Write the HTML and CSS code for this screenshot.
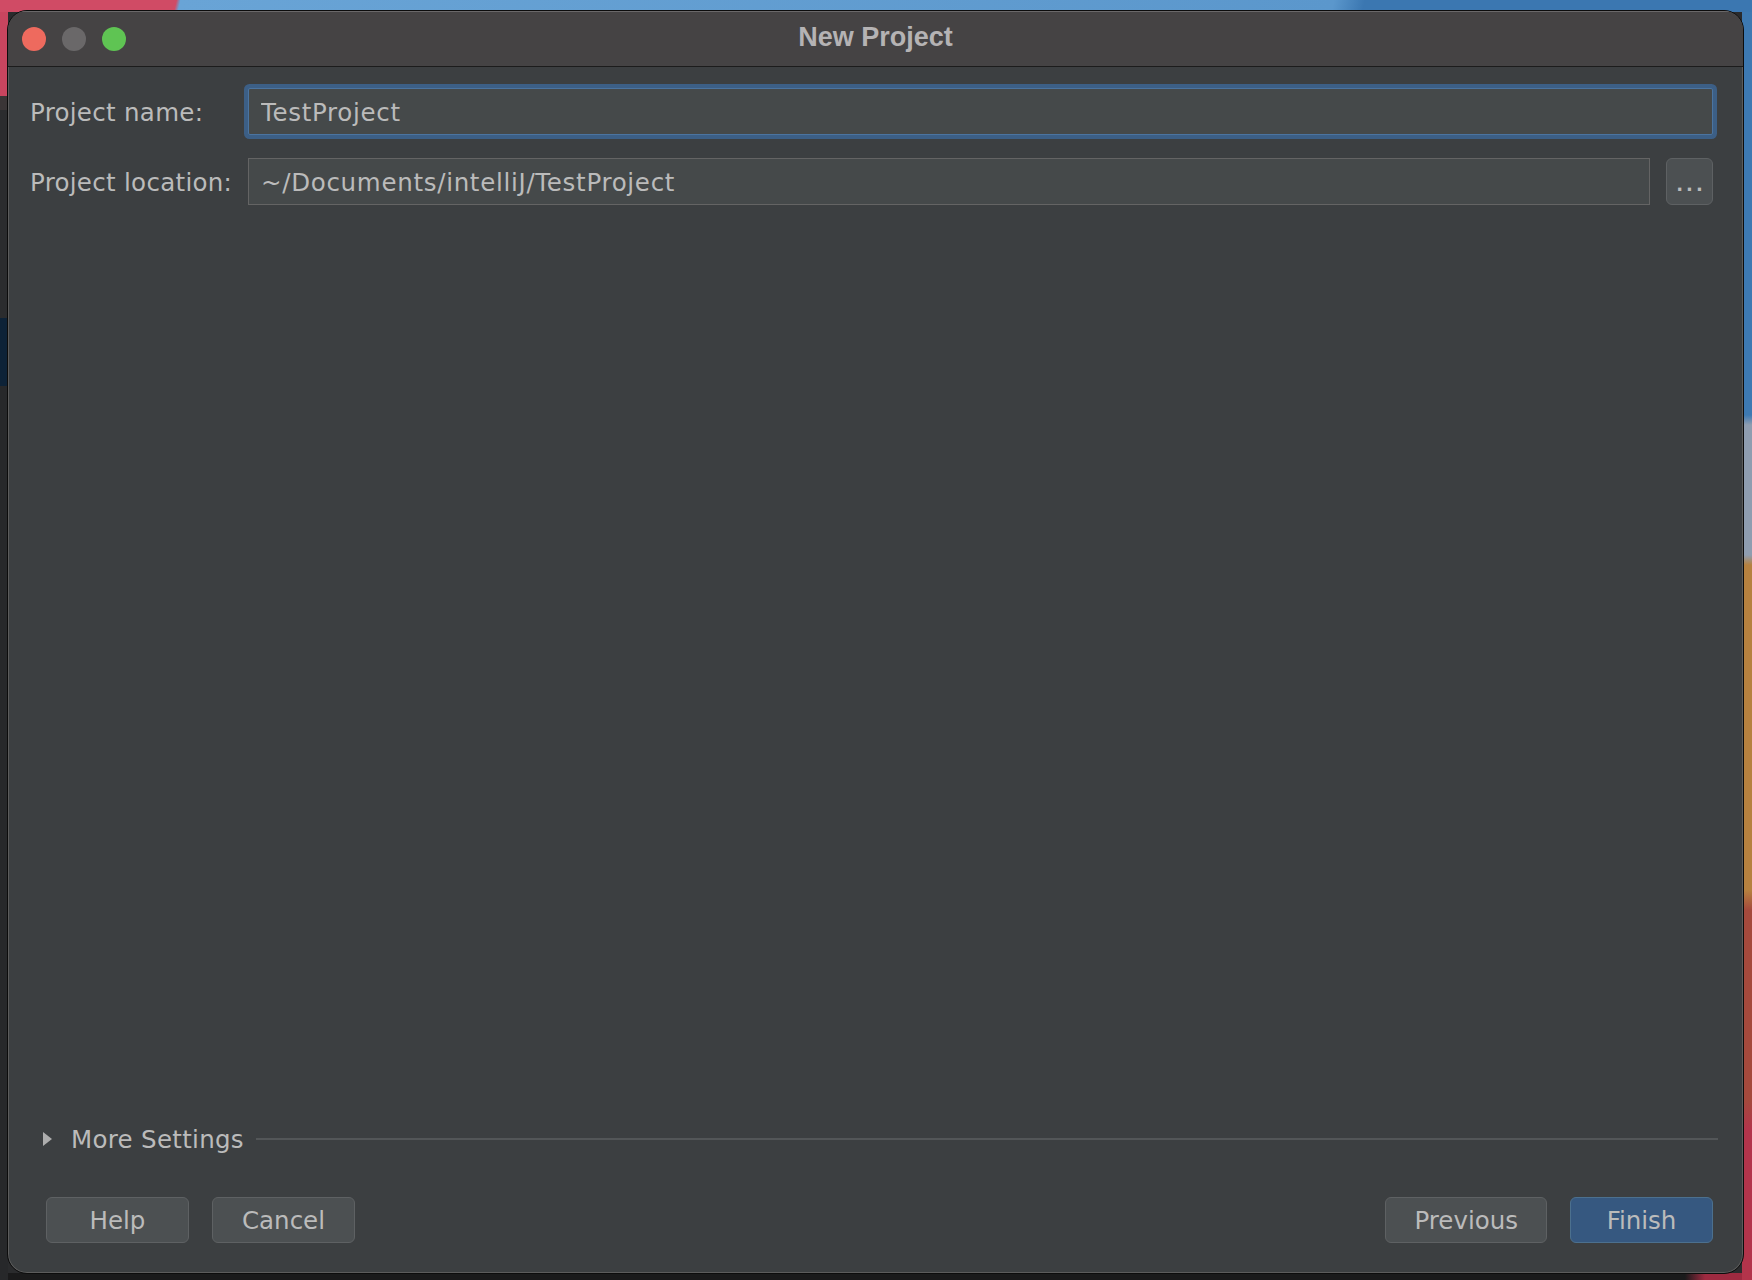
FILE: index.html
```html
<!DOCTYPE html>
<html lang="en">
<head>
    <meta charset="UTF-8">
    <meta name="viewport" content="width=device-width, initial-scale=1.0">
    <title>New Project</title>
    <link rel="stylesheet" href="styles.css">
</head>
<body>
    <div class="window">
        <header class="titlebar">
            <div class="lights">
                <span class="light close"></span>
                <span class="light minimize"></span>
                <span class="light zoom"></span>
            </div>
            <h1>New Project</h1>
            <div></div>
        </header>

        <main class="content">
            <div class="form">
                <label for="name">Project name:</label>
                <input type="text" id="name" class="field focused" value="TestProject">

                <label for="location">Project location:</label>
                <div class="location">
                    <input type="text" id="location" class="field" value="~/Documents/intelliJ/TestProject">
                    <button class="browse">...</button>
                </div>
            </div>

            <div class="spacer"></div>

            <!-- collapsed section -->
            <div class="more">
                <span class="arrow"></span>
                <span class="more-title">More Settings</span>
                <span class="rule"></span>
            </div>

            <footer class="actions">
                <div class="group">
                    <button>Help</button>
                    <button>Cancel</button>
                </div>
                <div class="group">
                    <button>Previous</button>
                    <button class="primary">Finish</button>
                </div>
            </footer>
        </main>
    </div>
</body>
</html>
```

FILE: styles.css
```css
* {
    margin: 0;
    padding: 0;
    box-sizing: border-box;
}

body {
    width: 1752px;
    height: 1280px;
    padding: 10px 8px 6px 7px;
    font-family: "DejaVu Sans", Verdana, sans-serif;
    color: #bbbbbb;
    background-color: #2a2b2d;
    background-image:
        linear-gradient(103deg, #d04b65 0 172px, #69a4d6 176px, #5b97cc 1300px, #3b77b1 1330px),
        linear-gradient(to bottom, #c9455f 0 96px, #3a3536 96px 110px, #2b2c2e 110px 318px, #0d2237 318px 386px, #27282a 386px),
        linear-gradient(to bottom, #3d79b2 0 415px, #8f9db0 425px 555px, #b6813f 565px 890px, #a4493c 910px 1100px, #b3344b 1130px),
        linear-gradient(to right, #1a1a1b 0 1685px, #9e2a40 1705px);
    background-repeat: no-repeat;
    background-position: 0 0, 0 0, right 0 top 0, 0 bottom;
    background-size: 100% 12px, 8px 100%, 10px 100%, 100% 7px;
}

.window {
    width: 1737px;
    height: 1264px;
    display: flex;
    flex-direction: column;
    background-color: #3c3f41;
    border: 1px solid #0c0c0c;
    border-radius: 20px;
    overflow: hidden;
    box-shadow: inset 0 0 0 1px #5c5c5c;
}

.titlebar {
    height: 56px;
    display: grid;
    grid-template-columns: 1fr auto 1fr;
    align-items: center;
    background-color: #454344;
    border-bottom: 1px solid #1c1c1c;
    box-shadow: inset 0 1px 0 #6a6869;
}

.lights {
    display: flex;
    gap: 16px;
    padding-left: 14px;
}

.light {
    width: 24px;
    height: 24px;
    border-radius: 50%;
}

.close { background-color: #ee6a5e; }
.minimize { background-color: #6a6869; }
.zoom { background-color: #5fc453; }

.titlebar h1 {
    margin-top: -2px;
    font-family: "Liberation Sans", Arial, sans-serif;
    font-size: 27px;
    font-weight: bold;
    color: #b5b3b4;
}

.content {
    flex: 1;
    display: flex;
    flex-direction: column;
    padding: 21px 30px 30px 22px;
    font-size: 24.5px;
    letter-spacing: 0.3px;
}

.form {
    display: grid;
    grid-template-columns: 218px 1fr;
    row-gap: 23px;
    align-items: center;
}

.form label {
    padding-top: 2px;
}

.field {
    height: 47px;
    padding: 2px 12px 0;
    font-family: inherit;
    font-size: 24.5px;
    letter-spacing: 0.7px;
    color: #bbbbbb;
    background-color: #45494a;
    border: 1px solid #646464;
    outline: none;
}

.field.focused {
    border-color: #4b74a0;
    border-radius: 2px;
    box-shadow: 0 0 0 4px #3c5f86;
}

.location {
    display: flex;
    gap: 16px;
}

.location .field {
    flex: 1;
}

button {
    height: 46px;
    min-width: 143px;
    padding: 0 28px;
    font-family: inherit;
    font-size: 24.5px;
    letter-spacing: 0;
    color: #bbbbbb;
    background-color: #4c5052;
    border: 1px solid #5e6163;
    border-radius: 6px;
}

.browse {
    width: 47px;
    height: 47px;
    min-width: 0;
    padding: 6px 0 0 3px;
    font-size: 18px;
    font-weight: bold;
    letter-spacing: 3px;
}

.spacer {
    flex: 1;
}

.more {
    display: flex;
    align-items: center;
    height: 40px;
    margin-right: -5px;
    padding-left: 13px;
}

.arrow {
    width: 0;
    height: 0;
    border-top: 7px solid transparent;
    border-bottom: 7px solid transparent;
    border-left: 9px solid #adadad;
}

.more-title {
    margin-left: 19px;
}

.rule {
    flex: 1;
    height: 2px;
    margin-left: 12px;
    background-color: #535658;
}

.actions {
    display: flex;
    justify-content: space-between;
    margin-top: 38px;
    padding-left: 16px;
}

.group {
    display: flex;
    gap: 23px;
}

.primary {
    background-color: #365880;
    border-color: #4c708e;
}
```
